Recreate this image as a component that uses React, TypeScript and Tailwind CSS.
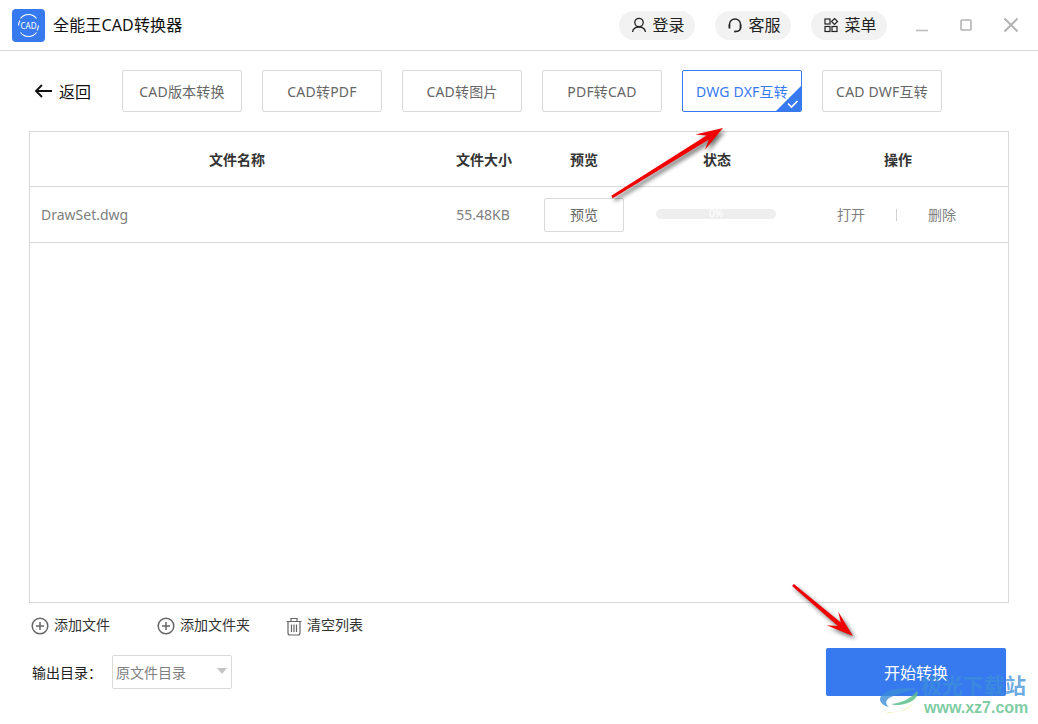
import React from "react";

const font = "font-['Noto_Sans','Noto_Sans_CJK_SC',sans-serif]";

function Tab({ label, active }: { label: string; active?: boolean }) {
  return (
    <div
      className={
        "relative flex h-[42px] w-[120px] items-center justify-center overflow-hidden rounded-[2px] border pt-[1px] text-[14px] tracking-[0.2px] " +
        (active ? "border-[#377af0] text-[#377af0]" : "border-[#d9d9d9] text-[#666666]")
      }
    >
      {label}
      {active && (
        <svg className="absolute bottom-0 right-0" width="25" height="25" viewBox="0 0 25 25">
          <path d="M25 0V25H0Z" fill="#377af0" />
          <path d="M12 17.5l3.5 3.5 6-6" fill="none" stroke="#fff" strokeWidth="1.6" />
        </svg>
      )}
    </div>
  );
}

function Pill({ icon, label }: { icon: React.ReactNode; label: string }) {
  return (
    <div className="flex h-[29px] w-[76px] items-center justify-center gap-[5px] rounded-full bg-[#f2f2f2] pl-[2px] text-[16px] text-[#222222]">
      {icon}
      <span>{label}</span>
    </div>
  );
}

function PlusCircle() {
  return (
    <svg width="18" height="18" viewBox="0 0 18 18" fill="none" stroke="#666" strokeWidth="1.5">
      <circle cx="9" cy="9" r="7.8" />
      <path d="M9 5v8M5 9h8" />
    </svg>
  );
}

function Arrow({ x1, y1, x2, y2 }: { x1: number; y1: number; x2: number; y2: number }) {
  const a = Math.atan2(y2 - y1, x2 - x1);
  const c = Math.cos(a);
  const s = Math.sin(a);
  const L = 27;
  const notch = 18;
  const w = 9;
  const t = 2.3;
  const p = (d: number, o: number) => `${x2 - c * d - s * o},${y2 - s * d + c * o}`;
  const tail = (o: number) => `${x1 - s * o},${y1 + c * o}`;
  const pts = [tail(-t * 0.6), p(notch, -t), p(L, -w), `${x2},${y2}`, p(L, w), p(notch, t), tail(t * 0.6)].join(" ");
  return (
    <g>
      <polygon points={pts} fill="#000" opacity="0.55" transform="translate(2.5 3)" filter="url(#blur)" />
      <polygon points={pts} fill="#f00000" />
    </g>
  );
}

export default function App() {
  return (
    <div className={"relative flex h-[724px] w-[1038px] flex-col overflow-hidden bg-white " + font}>
      {/* title bar */}
      <div className="flex h-[51px] shrink-0 items-center border-b border-[#d9d9d9] pl-[12px] pr-[19px]">
        <div className="flex h-[33px] w-[33px] items-center justify-center rounded-[4px] bg-[#377af0]">
          <svg width="27" height="27" viewBox="0 0 27 27" fill="none" stroke="#fff" strokeWidth="1.1">
            <path d="M5.500 6.500A10 10 0 0 1 21.500 6.500M21.500 20.500A10 10 0 0 1 5.500 20.500" />
            <path d="M3.500 13.500A10 10 0 0 1 5 8.500M23.500 13.500A10 10 0 0 1 22 18.500" />
            <text x="13.5" y="16.500" textAnchor="middle" fontSize="8" fill="#fff" stroke="none">CAD</text>
          </svg>
        </div>
        <span className="ml-[8px] text-[16px] tracking-[0.15px] text-[#111111]">全能王CAD转换器</span>
        <div className="ml-auto flex items-center gap-[20px]">
          <Pill
            label="登录"
            icon={
              <svg width="16" height="16" viewBox="0 0 16 16" fill="none" stroke="#222" strokeWidth="1.3">
                <circle cx="8" cy="5.500" r="4.200" />
                <path d="M1.500 15c.6-3.200 3-5 6.500-5s5.900 1.800 6.500 5" />
              </svg>
            }
          />
          <Pill
            label="客服"
            icon={
              <svg width="16" height="16" viewBox="0 0 16 16" fill="none" stroke="#222" strokeWidth="1.4">
                <path d="M2.500 8.500V7.500a5.500 5.500 0 0 1 11 0v1" />
                <path d="M13.500 10.500c0 2.500-2 4-5 4" />
                <rect x="1.500" y="7.500" width="1.800" height="4" fill="#222" stroke="none" />
                <rect x="12.700" y="7.500" width="1.800" height="4" fill="#222" stroke="none" />
                <circle cx="8" cy="14.500" r="1" fill="#222" stroke="none" />
              </svg>
            }
          />
          <Pill
            label="菜单"
            icon={
              <svg width="16" height="16" viewBox="0 0 16 16" fill="none" stroke="#222" strokeWidth="1.2">
                <rect x="2" y="2" width="5" height="5" />
                <path d="M11.500 1.500l3 3-3 3-3-3z" />
                <rect x="2" y="9.500" width="5" height="5" />
                <rect x="9" y="9.500" width="5" height="5" />
              </svg>
            }
          />
        </div>
        <div className="ml-[28px] flex items-center gap-[30px]">
          <svg width="14" height="14" viewBox="0 0 14 14">
            <path d="M1 12.500h12" stroke="#bdbdbd" strokeWidth="1.6" />
          </svg>
          <svg width="14" height="14" viewBox="0 0 14 14" fill="none">
            <rect x="2" y="2" width="10" height="10" rx="1" stroke="#b3b3b3" strokeWidth="1.6" />
          </svg>
          <svg width="16" height="16" viewBox="0 0 16 16" fill="none">
            <path d="M1.500 1.500l13 13M14.500 1.500l-13 13" stroke="#b3b3b3" strokeWidth="2" />
          </svg>
        </div>
      </div>

      {/* tabs */}
      <div className="mt-[19px] flex h-[42px] shrink-0 items-center pl-[34px]">
        <div className="flex w-[88px] items-center text-[16px] text-[#111111]">
          <svg width="18" height="14" viewBox="0 0 18 14" fill="none" stroke="#111" strokeWidth="1.9">
            <path d="M18 7H2M8 1L2 7l6 6" />
          </svg>
          <span className="ml-[7px] mt-[2px]">返回</span>
        </div>
        <div className="flex gap-[20px]">
          <Tab label="CAD版本转换" />
          <Tab label="CAD转PDF" />
          <Tab label="CAD转图片" />
          <Tab label="PDF转CAD" />
          <Tab label="DWG DXF互转" active />
          <Tab label="CAD DWF互转" />
        </div>
      </div>

      {/* table */}
      <div className="ml-[29px] mt-[19px] flex h-[472px] w-[980px] shrink-0 flex-col border border-[#d9d9d9]">
        <div className="flex h-[55px] shrink-0 items-center border-b border-[#d9d9d9] pt-[1px] text-[14px] font-bold text-[#333333]">
          <div className="w-[414px] text-center">文件名称</div>
          <div className="w-[80px] text-center">文件大小</div>
          <div className="w-[120px] text-center">预览</div>
          <div className="w-[146px] text-center">状态</div>
          <div className="w-[218px] pr-[2px] text-center">操作</div>
        </div>
        <div className="flex h-[56px] shrink-0 items-center border-b border-[#d9d9d9] text-[14px] text-[#808080]">
          <div className="w-[414px] pl-[11px]">DrawSet.dwg</div>
          <div className="w-[80px] pr-[2px] text-center">55.48KB</div>
          <div className="flex w-[120px] justify-center">
            <div className="flex h-[34px] w-[80px] items-center justify-center rounded-[2px] border border-[#d9d9d9] text-[#666666]">
              预览
            </div>
          </div>
          <div className="flex w-[146px] justify-center pb-[2px] pr-[2px]">
            <div className="flex h-[10px] w-[120px] items-center justify-center rounded-full bg-[#eeeeee] text-[10px] text-white">
              0%
            </div>
          </div>
          <div className="flex w-[218px] items-center text-[14px]">
            <span className="ml-[47px] w-[28px]">打开</span>
            <span className="ml-[31px] h-[12px] w-px bg-[#d0d0d0]" />
            <span className="ml-[31px]">删除</span>
          </div>
        </div>
      </div>

      {/* bottom actions */}
      <div className="ml-[31px] mt-[13px] flex h-[20px] shrink-0 items-center text-[14px] leading-[18px] text-[#333333]">
        <PlusCircle />
        <span className="ml-[5px] -translate-y-px">添加文件</span>
        <span className="ml-[47px] flex items-center">
          <PlusCircle />
          <span className="ml-[5px] -translate-y-px">添加文件夹</span>
        </span>
        <span className="ml-[36px] flex items-center">
          <svg width="16" height="19" viewBox="0 0 16 19" fill="none" stroke="#666" strokeWidth="1.2">
            <path d="M0.500 4.500h15M5 4.500V1.500h6v3M2 4.500v11.500a2 2 0 0 0 2 2h8a2 2 0 0 0 2-2V4.500M5.500 7.500v7.500M8 7.500v7.500M10.500 7.500v7.500" />
          </svg>
          <span className="ml-[5px] -translate-y-px">清空列表</span>
        </span>
      </div>

      <div className="mt-[12px] flex shrink-0 items-start pl-[32px] pr-[32px]">
        <div className="mt-[7px] flex h-[34px] items-center text-[14px] text-[#222222]">
          <span className="w-[80px] pt-[1px]">输出目录：</span>
          <div className="relative flex h-[34px] w-[120px] items-center rounded-[2px] border border-[#d9d9d9] pl-[3px] text-[14px] text-[#808080]">
            原文件目录
            <svg className="absolute right-[4px] top-[12px]" width="10" height="6" viewBox="0 0 10 6">
              <path d="M0 0h10L5 6z" fill="#c4c4c4" />
            </svg>
          </div>
        </div>
        <div className="ml-auto flex h-[48px] w-[180px] items-center justify-center rounded-[2px] bg-[#377af0] pt-[1px] text-[16px] text-white">
          开始转换
        </div>
      </div>

      {/* annotation arrows */}
      <svg className="pointer-events-none absolute left-0 top-0" width="1038" height="724">
        <defs>
          <filter id="blur">
            <feGaussianBlur stdDeviation="2" />
          </filter>
        </defs>
        <Arrow x1={612} y1={197} x2={723} y2={128} />
        <Arrow x1={793} y1={585} x2={853} y2={636} />
      </svg>

      {/* watermark */}
      <div className="pointer-events-none absolute left-[921px] top-[672px] flex flex-col">
        <span className="text-[21px] font-bold leading-[26px] text-[#3d8fd8]/75">极光下载站</span>
        <span className="pl-[3px] font-['Liberation_Sans',sans-serif] text-[16px] font-bold leading-[20px] text-[#5cc08a]/80">
          www.xz7.com
        </span>
      </div>
      <svg className="pointer-events-none absolute left-[879px] top-[688px]" width="42" height="26" viewBox="0 0 42 26" fill="none">
        <path d="M38 1C22-2 2 3 1 11c0 4 4 7 9 8-4-3-4-7 2-10C19 6 28 3 38 1z" fill="#3d8fd8" opacity="0.8" />
        <path d="M38 3c3 6-6 13-18 14-3 0-6 0-8-1 10-1 20-5 26-13z" fill="#5cc08a" opacity="0.85" />
        <path d="M7 24c10 1 22-1 27-9-5 6-14 9-24 10z" fill="#e5e77a" opacity="0.85" />
      </svg>
    </div>
  );
}
